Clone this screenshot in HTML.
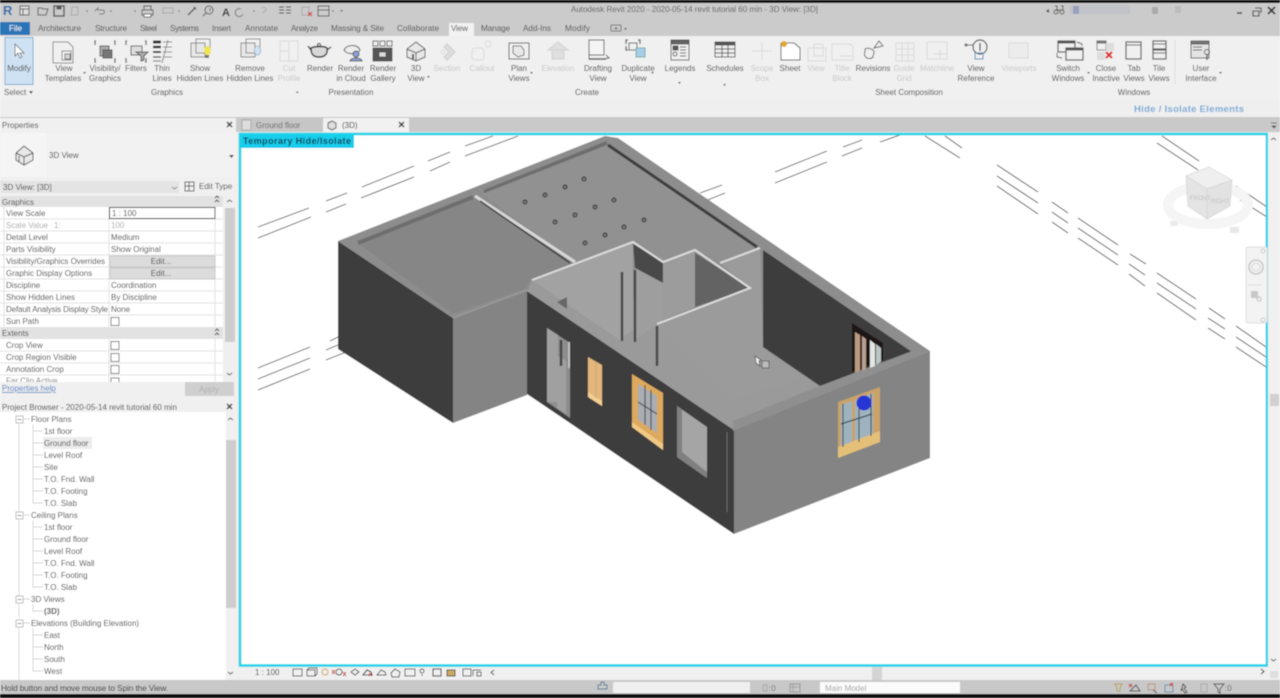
<!DOCTYPE html>
<html><head><meta charset="utf-8"><title>Autodesk Revit 2020</title>
<style>
html,body{margin:0;padding:0;background:#fff;width:1280px;height:698px;overflow:hidden}
svg{display:block;position:absolute;left:0;top:0}
text{font-family:"Liberation Sans",Arial,sans-serif;font-size:8px;fill:#3e3e3e}
.c{text-anchor:middle}
.l{fill:#c8c8c8}
.t{font-size:8.2px;fill:#4a4a4a}
.i{fill:none;stroke:#5a5a5a;stroke-width:1}
.g{stroke:#444;stroke-width:.9;fill:none}
.f{fill:none;stroke:#dadada;stroke-width:1}
.r{stroke:#d8d8d8;stroke-width:.7}
</style></head><body>
<svg width="1280" height="698" viewBox="0 0 1280 698" xmlns="http://www.w3.org/2000/svg">
<defs><filter id="b" x="-2%" y="-2%" width="104%" height="104%"><feGaussianBlur stdDeviation="0.45"/></filter></defs>
<g filter="url(#b)">
<!-- chrome backgrounds -->
<rect width="1280" height="698" fill="#f0f0f0"/>
<rect y="3" width="1280" height="33" fill="#cbcbcb"/>
<rect y="36" width="1280" height="62" fill="#f0f0f0"/>
<rect y="98" width="1280" height="19" fill="#efefef"/>
<rect y="117" width="1280" height="15" fill="#c9c9c9"/>
<rect y="0" width="1280" height="3" fill="#0a0a0a"/>
<!-- QAT -->
<text x="3" y="15" style="font-size:13px;font-weight:bold;fill:#2d6aa8">R</text>
<g class="i">
<rect x="20" y="6" width="9" height="9" fill="#ddd"/><path d="M20 9h9M23 9v6"/>
<path d="M38 8h4l1 1h5l-2 6h-8z"/>
<rect x="54" y="6" width="10" height="10" stroke-width="1.400"/><rect x="57" y="6" width="4" height="3" fill="#555"/>
<path d="M72 7h6v8h-7z" stroke="#aaa"/>
<path d="M95 11l3-3v2h5c2 0 2 4-1 4h-3" stroke="#777"/>
<path d="M119 13h9M123 9l3 3" stroke="#ccc"/>
<rect x="142" y="10" width="11" height="5"/><rect x="144" y="6" width="7" height="4"/><rect x="144" y="14" width="7" height="3" fill="#fff"/>
<rect x="163" y="8" width="10" height="5" stroke="#aaa"/>
<path d="M188 15l7-7M194 7l2 2" stroke-width="1.400"/>
<circle cx="209" cy="10" r="4"/><path d="M206 13l-3 3M210 8v3"/>
<path d="M241 9a4 4 0 1 0 2 5" stroke="#777"/><path d="M262 8c3-2 5 1 3 3l-2 2" stroke="#aaa"/>
<path d="M279 7h5M279 10h5M279 13h5M286 7h5M286 10h5M286 13h5" stroke="#333"/>
<rect x="302" y="7" width="7" height="8" stroke="#aaa"/>
<rect x="318" y="6" width="11" height="10"/><path d="M318 10h11"/>
</g>
<text x="222" y="16" style="font-size:11px;font-weight:bold;fill:#333">A</text>
<path d="M308 12l4 4M312 12l-4 4" stroke="#c33" stroke-width="1.200"/>
<g fill="#666"><circle cx="87" cy="11" r=".8"/><circle cx="111" cy="11" r=".8"/><circle cx="135" cy="11" r=".8"/><circle cx="179" cy="11" r=".8"/><circle cx="254" cy="11" r=".8"/><circle cx="333" cy="11" r=".8"/><path d="M340 10h3l-1.500 2z"/></g>
<text class="c" x="694.500" y="12" textLength="247" style="font-size:8px;fill:#5e5e5e">Autodesk Revit 2020 - 2020-05-14 revit tutorial 60 min - 3D View: [3D]</text>
<!-- window controls / search -->
<rect x="1070" y="5" width="60" height="9" fill="#b8bcc8" opacity=".5"/><rect x="1073" y="6" width="6" height="8" fill="#7f88b8" opacity=".6"/>
<rect x="1152" y="7" width="6" height="7" fill="#aaa"/><rect x="1175" y="6" width="6" height="7" fill="#bbb"/>
<path d="M1046 11l3-2v4z" fill="#444"/>
<g class="i" stroke-width="1.200"><circle cx="1056" cy="12" r="2"/><circle cx="1062" cy="12" r="2"/><path d="M1055 6h2v4M1061 6h2v4M1057 10h4"/></g>
<path d="M1237 13h5" stroke="#444" stroke-width="1.500"/>
<path d="M1253 11h6v5h-6zM1255 8h6v5" fill="none" stroke="#444" stroke-width="1.100"/>
<path d="M1268 7l7 7M1275 7l-7 7" stroke="#333" stroke-width="1.700"/>
<!-- tabs -->
<rect x="0" y="22" width="30" height="13" fill="#2b74b8"/>
<text class="c" x="15.500" y="31" style="fill:#f2f6fa;font-size:8px">File</text>
<rect x="449" y="23" width="25" height="13" fill="#f2f2f2"/>
<text class="t" x="38" y="31" textLength="43">Architecture</text>
<text class="t" x="95" y="31" textLength="32">Structure</text>
<text class="t" x="140" y="31" textLength="17">Steel</text>
<text class="t" x="170" y="31" textLength="29">Systems</text>
<text class="t" x="212" y="31" textLength="19">Insert</text>
<text class="t" x="245" y="31" textLength="33">Annotate</text>
<text class="t" x="291" y="31" textLength="27">Analyze</text>
<text class="t" x="331" y="31" textLength="53">Massing &amp; Site</text>
<text class="t" x="397" y="31" textLength="42">Collaborate</text>
<text class="t" x="451" y="31" textLength="17">View</text>
<text class="t" x="481" y="31" textLength="29">Manage</text>
<text class="t" x="523" y="31" textLength="28">Add-Ins</text>
<text class="t" x="565" y="31" textLength="25">Modify</text>
<rect x="611" y="25" width="10" height="6" rx="1" fill="none" stroke="#555" stroke-width=".8"/><path d="M614 29l2-2 2 2z" fill="#555"/><path d="M624 28h3l-1.500 2z" fill="#555"/>
<!-- Modify -->
<rect x="5" y="37.500" width="28" height="47" fill="#cfe2f3" stroke="#7faed3"/>
<path d="M15 44v12l3-3 2 5 2-1-2-4h4z" fill="#fff" stroke="#666" stroke-width=".8"/>
<text class="c" x="19" y="71">Modify</text>
<text x="4" y="95">Select</text><path d="M29 91h4l-2 3z" fill="#555"/>
<!-- ribbon icons -->
<g class="i">
<path d="M53 42h15l5 5v16H53z" stroke="#888"/><rect x="62" y="51" width="9" height="9" stroke="#888"/><rect x="65" y="54" width="5" height="5" fill="#d8d8d8" stroke="#777"/>
<path d="M96 41h-1v4M114 41h1v4M96 62h-1v-4M114 62h1v-4" stroke-width="1.200"/><rect x="100" y="46" width="9" height="10" fill="#aaa"/><rect x="103" y="50" width="9" height="8" fill="#777"/>
<path d="M127 41h-1v4M145 41h1v4M127 62h-1v-4M145 62h1v-4" stroke-width="1.200"/><rect x="131" y="46" width="11" height="9" fill="#ddd"/><path d="M136 52h12l-4 4v4l-3 1v-5z" fill="#aaa"/>
<path d="M153 42h8" stroke="#333" stroke-width="3"/><path d="M153 47h8" stroke="#333" stroke-width="2.400"/><path d="M153 52h8" stroke="#333" stroke-width="1.800"/><path d="M153 57h8" stroke="#333" stroke-width="1.200"/><path d="M153 61h8"/><path d="M163 42h9M163 47h9M163 52h9M163 57h9" stroke="#888"/><path d="M168 40l-6 23" stroke="#888"/>
<rect x="191" y="43" width="14" height="14" fill="#e8e8e8" stroke="#888"/><rect x="196" y="39" width="14" height="14" stroke="#888"/>
<rect x="241" y="43" width="14" height="14" fill="#e8e8e8" stroke="#888"/><rect x="246" y="39" width="14" height="14" stroke="#888"/>
<path d="M311 48c4-2 14-2 16 0 1 6-2 9-8 9-6 0-8-3-8-9z" fill="#d8d8d8" stroke="#333" stroke-width="1.400"/><path d="M327 50l4-3M311 50l-3-4" stroke="#333" stroke-width="1.400"/><circle cx="319" cy="45" r="1.500" stroke="#333"/>
<path d="M344 50c3-6 14-6 16 0-2 5-13 5-16 0z" fill="#eee"/><circle cx="356" cy="54" r="3" fill="#8ea0d8"/><path d="M350 61c1-4 11-4 12 0z" fill="#8ea0d8"/>
<rect x="373" y="41" width="5" height="5"/><rect x="380" y="41" width="5" height="5"/><rect x="387" y="41" width="5" height="5"/><rect x="373" y="48" width="19" height="13" fill="#555"/><rect x="379" y="52" width="7" height="5" fill="#ddd"/>
<path d="M407 49l9-7 9 7v8l-9 4-9-4z" fill="#e8e8e8"/><path d="M407 49l9 4 9-4M416 53v8"/><path d="M413 54v6" stroke-width="2"/>
<rect x="509" y="43" width="20" height="16"/><path d="M513 46h8l3 4v5l-6 2-5-4z" stroke="#777" fill="#e8e8e8"/>
<path d="M589 40h15v15h-15z" fill="#f4f4f4"/><path d="M589 55v4h17"/><path d="M604 59l5-1-3-3" /><path d="M589 59h17" stroke-width="1.600"/>
<path d="M628 40h-2v4M638 40h2v4M628 50h-2v-4" stroke-width="1.200"/><rect x="629" y="43" width="8" height="7"/><rect x="636" y="48" width="9" height="9" fill="#a8cdea" stroke="#7aa"/>
<rect x="671" y="40" width="18" height="20"/><rect x="672" y="41" width="16" height="3" fill="#666"/><rect x="673" y="46" width="5" height="4" fill="#555"/><circle cx="675" cy="54" r="2"/><path d="M680 47h6M680 50h6M680 53h6M680 56h6"/>
<rect x="715" y="42" width="20" height="15" fill="#eee"/><rect x="715" y="42" width="20" height="3" fill="#555"/><path d="M715 49h20M715 53h20M722 45v12M728 45v12"/>
<path d="M781 43h13l6 5v12h-19z" fill="#fff"/><circle cx="784" cy="44" r="3" fill="#e3a82a" stroke="none"/>
<path d="M865 49c3-2 6 0 8 1 3 3-1 5 0 7-3 3-7 1-8-1-2-2 1-4 0-7zM874 48l5-7 4 5z" stroke-width=".9"/>
<circle cx="980" cy="47" r="7" stroke-width="1.200"/><path d="M966 45h7"/><circle cx="966" cy="45" r="1"/>
<path d="M980 43v8" stroke="#333" stroke-width="1.200"/><rect x="975" y="53" width="8" height="6" stroke="#4a8ac0"/>
<rect x="1058" y="41" width="17" height="11" stroke-width="1.200"/><rect x="1058" y="41" width="17" height="2" fill="#555"/><rect x="1066" y="48" width="17" height="12" fill="#f0f0f0" stroke-width="1.200"/><rect x="1066" y="48" width="17" height="2" fill="#555"/><path d="M1077 42l5 2v2M1057 53v4l5 1"/>
<rect x="1097" y="41" width="9" height="9" stroke="#888"/><rect x="1097" y="41" width="9" height="2" fill="#888"/><rect x="1106" y="43" width="8" height="8" fill="#ddd" stroke="none"/><rect x="1097" y="52" width="8" height="8" fill="#ddd" stroke="none"/>
<rect x="1126" y="42" width="15" height="17" stroke-width="1.200"/><path d="M1126 45h15" />
<rect x="1153" y="41" width="13" height="8" stroke-width="1.200"/><rect x="1153" y="50" width="13" height="9" stroke-width="1.200"/><path d="M1153 44h13M1153 53h13"/>
<rect x="1191" y="41" width="18" height="17" fill="#e4e4e4"/><rect x="1191" y="41" width="18" height="3" fill="#777"/><path d="M1193 47h9M1193 50h9"/><circle cx="1207" cy="52" r="2.500"/><path d="M1207 54v6" stroke-width="1.400"/>
</g>
<path d="M1106 52l6 6M1112 52l-6 6" stroke="#d33" stroke-width="2.200"/>
<path d="M206 58c-3-4-2-8 1-9 4 0 5 5 2 9z" fill="#f3e64a" transform="translate(0,-3)"/><rect x="205" y="55" width="4" height="3" fill="#777"/>
<path d="M256 58c-3-4-2-8 1-9 4 0 5 5 2 9z" fill="#cfe0f4" stroke="#8aa" stroke-width=".6" transform="translate(0,-3)"/>
<!-- disabled icons -->
<g class="f">
<rect x="280" y="41" width="18" height="20"/><path d="M289 41v20M280 51h9"/>
<path d="M447 44l8 8-8 8-3-3 5-5-5-5z" fill="#ddd" stroke="#ccc"/><circle cx="443" cy="52" r="2"/>
<rect x="472" y="48" width="12" height="12" rx="3"/><circle cx="488" cy="44" r="3"/>
<path d="M548 50l10-8 10 8zM552 50h12v9h-12z" fill="#dfdfdf" stroke="#d0d0d0"/>
<path d="M752 51h20M762 42v18"/><rect x="814" y="44" width="9" height="12"/><rect x="808" y="48" width="18" height="13"/>
<path d="M832 44h18l3 3v13h-21z"/><path d="M840 56h12"/><path d="M896 43h18v18h-18zM902 43v18M908 43v18M896 49h18M896 55h18"/><rect x="927" y="42" width="20" height="17"/><path d="M934 54h12M940 50v8"/>
<rect x="1009" y="43" width="19" height="15" fill="#ececec"/>
</g>
<path d="M1175 40v44" stroke="#dcdcdc"/>
<!-- ribbon labels -->
<text class="c" x="64" y="71">View</text><text class="c" x="63" y="81">Templates</text>
<text class="c" x="105" y="71">Visibility/</text><text class="c" x="105" y="81">Graphics</text>
<text class="c" x="136" y="71">Filters</text>
<text class="c" x="162" y="71">Thin</text><text class="c" x="162" y="81">Lines</text>
<text class="c" x="200" y="71">Show</text><text class="c" x="200" y="81">Hidden Lines</text>
<text class="c" x="250" y="71">Remove</text><text class="c" x="250" y="81">Hidden Lines</text>
<text class="c l" x="289" y="71">Cut</text><text class="c l" x="289" y="81">Profile</text>
<text class="c" x="320" y="71">Render</text>
<text class="c" x="351" y="71">Render</text><text class="c" x="351" y="81">in Cloud</text>
<text class="c" x="383" y="71">Render</text><text class="c" x="383" y="81">Gallery</text>
<text class="c" x="416" y="71">3D</text><text class="c" x="416" y="81">View</text>
<text class="c l" x="447" y="71">Section</text><text class="c l" x="482" y="71">Callout</text>
<text class="c" x="519" y="71">Plan</text><text class="c" x="519" y="81">Views</text>
<text class="c l" x="558" y="71">Elevation</text>
<text class="c" x="598" y="71">Drafting</text><text class="c" x="598" y="81">View</text>
<text class="c" x="638" y="71">Duplicate</text><text class="c" x="638" y="81">View</text>
<text class="c" x="680" y="71">Legends</text>
<text class="c" x="725" y="71">Schedules</text>
<text class="c l" x="762" y="71">Scope</text><text class="c l" x="762" y="81">Box</text>
<text class="c" x="790" y="71">Sheet</text>
<text class="c l" x="816" y="71">View</text>
<text class="c l" x="842" y="71">Title</text><text class="c l" x="842" y="81">Block</text>
<text class="c" x="873" y="71">Revisions</text>
<text class="c l" x="904" y="71">Guide</text><text class="c l" x="904" y="81">Grid</text>
<text class="c l" x="937" y="71">Matchline</text>
<text class="c" x="976" y="71">View</text><text class="c" x="976" y="81">Reference</text>
<text class="c l" x="1019" y="71">Viewports</text>
<text class="c" x="1068" y="71">Switch</text><text class="c" x="1068" y="81">Windows</text>
<text class="c" x="1106" y="71">Close</text><text class="c" x="1106" y="81">Inactive</text>
<text class="c" x="1134" y="71">Tab</text><text class="c" x="1134" y="81">Views</text>
<text class="c" x="1159" y="71">Tile</text><text class="c" x="1159" y="81">Views</text>
<text class="c" x="1201" y="71">User</text><text class="c" x="1201" y="81">Interface</text>
<text class="c" x="167" y="95">Graphics</text>
<text class="c" x="351" y="95">Presentation</text>
<text class="c" x="587" y="95">Create</text>
<text class="c" x="909" y="95">Sheet Composition</text>
<text class="c" x="1134" y="95">Windows</text>
<g fill="#555"><path d="M83 72h3l-1.500 2zM530 72h3l-1.500 2zM427 76h3l-1.500 2zM651 72h3l-1.500 2zM1087 72h3l-1.500 2zM1219 72h3l-1.500 2zM678 82h3l-1.500 2zM723 84h3l-1.500 2z"/></g>
<path d="M297 91l2 2-3 0z" fill="#666"/>
<text x="1134" y="112" textLength="110" style="font-size:9.500px;font-weight:bold;fill:#73a9d8">Hide / Isolate Elements</text>
<!-- view tabs -->
<rect x="240" y="118" width="83" height="14" fill="#c6c6c6"/>
<rect x="323" y="118" width="86" height="14" fill="#f1f1f1"/>
<rect x="242" y="120" width="9" height="10" fill="#ddd" stroke="#aaa"/>
<text x="256" y="128" style="fill:#666">Ground floor</text>
<path d="M328 123l4-2 4 2v5l-4 2-4-2z" fill="#ddd" stroke="#555"/>
<text x="342" y="128" style="fill:#333">(3D)</text>
<path d="M399 122l5 5M404 122l-5 5" stroke="#333" stroke-width="1.400"/>
<path d="M1271 123h6M1272 126h4l-2 2z" fill="#555" stroke="#555" stroke-width=".7"/>

<!-- LEFT: Properties -->
<rect x="0" y="118" width="236" height="562" fill="#f0f0f0"/>
<text x="2" y="128">Properties</text>
<path d="M227 122l5 5M232 122l-5 5" stroke="#333" stroke-width="1.400"/>
<rect x="1" y="133" width="46" height="44" fill="#f5f5f5"/>
<rect x="47" y="133" width="189" height="44" fill="#f2f2f2"/>
<path d="M16 153l8-7 9 7v7l-9 5-8-5z" fill="#e8e8e8" stroke="#555"/><path d="M16 153l8 4 9-4M24 157v8M19 156v6" fill="none" stroke="#555"/>
<text x="49" y="158">3D View</text>
<path d="M229 155h5l-2.500 3z" fill="#444"/>
<rect x="0" y="181" width="179" height="12" fill="#e4e4e4"/>
<text x="3" y="190">3D View: [3D]</text>
<path d="M172 187l2.500 2 2.500-2" stroke="#888" fill="none"/>
<g class="i"><rect x="185" y="182" width="9" height="9"/><path d="M185 186h9M189 182v9"/></g>
<text x="199" y="189">Edit Type</text>
<!-- property table -->
<rect x="0" y="196" width="223" height="11" fill="#e2e2e2"/>
<text x="2" y="205">Graphics</text>
<rect x="0" y="207" width="223" height="120" fill="#fff"/>
<rect x="0" y="327" width="223" height="12" fill="#e2e2e2"/>
<rect x="0" y="339" width="223" height="44" fill="#fff"/>
<text x="2" y="336">Extents</text>
<g class="r">
<path d="M0 219h223M0 231h223M0 243h223M0 255h223M0 267h223M0 279h223M0 291h223M0 303h223M0 315h223M0 351h223M0 363h223M0 375h223M109 207v120M109 339v44M215 207v120M215 339v44M4 207v120"/>
</g>
<rect x="109.500" y="207.500" width="105.500" height="11" fill="#fff" stroke="#333"/>
<text x="112" y="216">1 : 100</text>
<rect x="110" y="256" width="105" height="11" fill="#dcdcdc" stroke="#bbb" stroke-width=".7"/>
<rect x="110" y="268" width="105" height="11" fill="#dcdcdc" stroke="#bbb" stroke-width=".7"/>
<text x="6" y="216">View Scale</text>
<text x="6" y="228" style="fill:#aaa">Scale Value</text><text x="54" y="228" style="fill:#aaa">1:</text><text x="111" y="228" style="fill:#aaa">100</text>
<text x="6" y="240">Detail Level</text><text x="111" y="240">Medium</text>
<text x="6" y="252">Parts Visibility</text><text x="111" y="252">Show Original</text>
<text x="6" y="264" textLength="99">Visibility/Graphics Overrides</text><text class="c" x="161" y="264">Edit...</text>
<text x="6" y="276">Graphic Display Options</text><text class="c" x="161" y="276">Edit...</text>
<text x="6" y="288">Discipline</text><text x="111" y="288">Coordination</text>
<text x="6" y="300">Show Hidden Lines</text><text x="111" y="300">By Discipline</text>
<text x="6" y="312" textLength="102">Default Analysis Display Style</text><text x="111" y="312">None</text>
<text x="6" y="324">Sun Path</text>
<text x="6" y="348">Crop View</text>
<text x="6" y="360">Crop Region Visible</text>
<text x="6" y="372">Annotation Crop</text>
<rect x="111" y="317.500" width="8" height="8" fill="#fff" stroke="#777"/>
<rect x="111" y="341.500" width="8" height="8" fill="#fff" stroke="#777"/>
<rect x="111" y="353.500" width="8" height="8" fill="#fff" stroke="#777"/>
<rect x="111" y="365.500" width="8" height="8" fill="#fff" stroke="#777"/>
<rect x="111" y="378" width="8" height="5" fill="#fff" stroke="#777"/>
<text x="6" y="383.500" style="fill:#777">Far Clip Active</text>
<rect x="0" y="382" width="236" height="16" fill="#f0f0f0"/>
<path d="M215 198l2 -2 2 2M215 202l2-2 2 2M215 331l2-2 2 2M215 335l2-2 2 2" stroke="#444" fill="none"/>
<rect x="225" y="196" width="10" height="187" fill="#efefef"/>
<rect x="225" y="208" width="10" height="134" fill="#cdcdcd"/>
<path d="M227 202l2.500-2 2.500 2M227 373l2.500 2 2.500-2" stroke="#555" fill="none"/>
<text x="2" y="391" style="fill:#3f7cc0;text-decoration:underline">Properties help</text>
<rect x="185" y="382" width="49" height="14" fill="#cfcfcf"/>
<text class="c" x="209" y="392" style="fill:#b0b0b0">Apply</text>
<!-- Project Browser -->
<rect x="0" y="400" width="236" height="12" fill="#f0f0f0"/>
<text x="2" y="410" textLength="175">Project Browser - 2020-05-14 revit tutorial 60 min</text>
<path d="M227 404l5 5M232 404l-5 5" stroke="#333" stroke-width="1.400"/>
<rect x="0" y="412" width="226" height="268" fill="#fff"/>
<rect x="43" y="437" width="49" height="12" fill="#ececec"/>
<g stroke="#d4d4d4" stroke-width=".9" fill="none">
<path d="M19 424v90M19 520v78M19 604v14M19 628v52M33 424v80M33 431h10M33 443h10M33 455h10M33 467h10M33 479h10M33 491h10M33 503h10M33 520v68M33 527h10M33 539h10M33 551h10M33 563h10M33 575h10M33 587h10M33 604v8M33 611h10M33 628v44M33 635h10M33 647h10M33 659h10M33 671h10M23 419h7M23 515h7M23 599h7M23 623h7"/>
</g>
<g fill="#fff" stroke="#aaa" stroke-width=".8"><rect x="16" y="416" width="7" height="7"/><rect x="16" y="512" width="7" height="7"/><rect x="16" y="596" width="7" height="7"/><rect x="16" y="620" width="7" height="7"/></g>
<path d="M17.500 419.500h4M17.500 515.500h4M17.500 599.500h4M17.500 623.500h4" stroke="#666" stroke-width=".8"/>
<text x="31" y="422">Floor Plans</text>
<text x="44" y="434">1st floor</text>
<text x="44" y="446">Ground floor</text>
<text x="44" y="458">Level Roof</text>
<text x="44" y="470">Site</text>
<text x="44" y="482">T.O. Fnd. Wall</text>
<text x="44" y="494">T.O. Footing</text>
<text x="44" y="506">T.O. Slab</text>
<text x="31" y="518">Ceiling Plans</text>
<text x="44" y="530">1st floor</text>
<text x="44" y="542">Ground floor</text>
<text x="44" y="554">Level Roof</text>
<text x="44" y="566">T.O. Fnd. Wall</text>
<text x="44" y="578">T.O. Footing</text>
<text x="44" y="590">T.O. Slab</text>
<text x="31" y="602">3D Views</text>
<text x="44" y="614" style="font-weight:bold">(3D)</text>
<text x="31" y="626">Elevations (Building Elevation)</text>
<text x="44" y="638">East</text>
<text x="44" y="650">North</text>
<text x="44" y="662">South</text>
<text x="44" y="674">West</text>
<rect x="226" y="412" width="10" height="268" fill="#f0f0f0"/>
<rect x="226" y="440" width="10" height="168" fill="#cdcdcd"/>
<path d="M228 420l2.500-2 2.500 2M228 672l2.500 2 2.500-2" stroke="#555" fill="none"/>

<!-- VIEWPORT -->
<rect x="240" y="134" width="1028" height="532" fill="#fff"/>
<g stroke="#3a3a3a" stroke-width=".9" fill="none">
<path d="M258 227L309 208M258 238L311 217M326 201L347 193M326 212L346 204M362 187L414 166M361 198L414 177M428 161L450 152M430 171L450 162M465 146L493 136M465 156L518 136"/>
<path d="M700 193L722 185M700 203L725 193M775 172L827 151M775 183L827 162M842 156L862 148M843 147L862 140M880 142L900 135"/>
<path d="M258 368L310 347M258 379L310 358M258 390L310 369M326 350L338 345M326 360L346 352M330 341L338 337"/>
<path d="M925 136L960 158M945 136L962 148M997 165L1038 192M997 176L1038 203M997 186L1038 214M1052 202L1068 213M1052 212L1068 223M1052 222L1068 233M1078 218L1118 245M1078 228L1118 255M1078 238L1118 265"/>
<path d="M1162 136L1199 161M1157 143L1198 170M1208 167L1223 177M1236 186L1267 207M1240 200L1267 217M1130 254L1146 264M1129 264L1145 275M1129 274L1145 286M1157 273L1196 299M1157 283L1196 309M1157 293L1196 320M1209 308L1225 319M1208 318L1225 329M1208 328L1225 339M1236 326L1266 347M1236 337L1266 357M1236 347L1266 367"/>
</g>
<!-- Building -->
<polygon points="338,241 453,318 453,423 338,349" fill="#3e3e3e"/>
<polygon points="453,318 527,290 527,395 453,423" fill="#848484"/>
<polygon points="527,291 734,430 734,534 527,394" fill="#3d3d3d"/>
<polygon points="734,430 930,351 930,458 734,534" fill="#848484"/>
<polygon points="338,241 605,136 618,138 930,351 734,430 527,290 453,318" fill="#8d8d8d"/>
<polygon points="358,243 475,198 575,262 530,280 527,288 453,314" fill="#868686"/>
<path d="M358,243 L473,197" stroke="#6e6e6e" stroke-width="4"/>
<path d="M484,192 L607,143" stroke="#6e6e6e" stroke-width="4"/>
<path d="M453,318 L527,290" stroke="#9a9a9a" stroke-width="1.500"/>
<polygon points="482,194 607,145 760,248 720,263 695,250 663,262 633,242 575,262" fill="#919191"/>
<path d="M608,145 L757,247" stroke="#3c3c3c" stroke-width="3"/>
<path d="M475,196 L575,262" stroke="#d8d8d8" stroke-width="3"/>
<path d="M480,201 L570,263" stroke="#3c3c3c" stroke-width="1.500"/>
<g fill="#777" stroke="#2a2a2a" stroke-width=".9">
<circle cx="525" cy="202" r="2"/><circle cx="545" cy="195" r="2"/><circle cx="565" cy="187" r="2"/><circle cx="584" cy="179" r="2"/><circle cx="555" cy="222" r="2"/><circle cx="575" cy="215" r="2"/><circle cx="595" cy="207" r="2"/><circle cx="614" cy="200" r="2"/><circle cx="585" cy="243" r="2"/><circle cx="605" cy="235" r="2"/><circle cx="624" cy="227" r="2"/><circle cx="644" cy="220" r="2"/>
</g>
<polygon points="527,291 532,280 633,243 633,300 657,325 750,288 720,263 760,248 763,347 820,386 912,352 734,430" fill="#9a9a9a"/>
<polygon points="532,280 633,243 633,330 620,340 590,320" fill="#a2a2a2"/>
<polygon points="633,244 663,262 663,283 635,268" fill="#4a4a4a"/>
<polygon points="635,268 663,283 663,320 635,340" fill="#9e9e9e"/>
<polygon points="663,262 695,251 695,307 663,320" fill="#9c9c9c"/>
<polygon points="695,253 750,288 695,307" fill="#646464"/>
<polygon points="657,325 750,288 720,263 760,248 763,347 800,380 730,400" fill="#9b9b9b"/>
<polygon points="763,250 912,352 820,386 763,347" fill="#3c3c3c"/>
<path d="M622,272V341M635,270V342" stroke="#444" stroke-width="2.400"/><path d="M657,326V366" stroke="#444" stroke-width="2.400"/>
<polygon points="557,302 567,297 567,309" fill="#666"/>
<path d="M532,280 L633,242 L663,262 L695,250 L750,288 L657,324" fill="none" stroke="#dcdcdc" stroke-width="2"/>
<path d="M720,263 L760,248" stroke="#dcdcdc" stroke-width="2"/>
<polygon points="733,431 930,351 912,351 820,386 733,421" fill="#8f8f8f"/>
<!-- door left wall -->
<polygon points="547,328 570,343 570,418 547,402" fill="#8d8d8d"/>
<polygon points="547,328 558,335 558,356 566,361 566,414 557,408 557,402 547,402" fill="#a0a0a0"/>
<path d="M561,340V366" stroke="#444" stroke-width="2.500"/><path d="M569,342V368" stroke="#ccc" stroke-width="1.500"/>
<!-- window 1 -->
<polygon points="588,357 602,365 602,406 588,397" fill="#e3b67d"/><polygon points="588,392 602,401 602,406 588,397" fill="#f2cf93"/><path d="M596,362V398" stroke="#bb9a70" stroke-width=".6"/>
<!-- window 2 -->
<polygon points="632,374 663,393 663,450 632,427" fill="#dda95f"/>
<polygon points="638,384 657,396 657,433 638,420" fill="#a9adb4"/>
<path d="M645,385V425M651,390V430M638,402L657,414" stroke="#222" stroke-width=".9"/>
<polygon points="632,422 663,444 663,450 632,427" fill="#f0c985"/>
<!-- opening -->
<polygon points="677,406 707,427 707,478 677,457" fill="#a5a5a5"/>
<polygon points="677,406 682,410 682,452 707,472 707,478 677,457" fill="#808080"/>
<path d="M727,432V512" stroke="#6a6a6a" stroke-width="1"/>
<!-- back wall window -->
<polygon points="852,323 883,343 883,360 852,372" fill="#1f1712"/>
<polygon points="855,332 860,335 860,371 855,373" fill="#b89a80"/>
<polygon points="862,336 866,339 866,369 862,371" fill="#b8a090"/>
<polygon points="870,340 875,344 875,366 870,368" fill="#e2e6e4"/>
<polygon points="876,344 881,348 881,362 876,365" fill="#b9c6c2"/>
<!-- front window -->
<polygon points="838,402 880,387 880,442 838,458" fill="#c9a368"/>
<polygon points="841,405 852,401 852,444 841,448" fill="#9fb3bf"/><polygon points="855,400 873,393 873,437 855,443" fill="#9fb3bf"/>
<polygon points="838,447 880,431 880,442 838,458" fill="#e3bf78"/>
<path d="M843,404V447M859,398V442M871,394V436M841,424L872,414" stroke="#1f2a3a" stroke-width="1"/>
<circle cx="864" cy="403" r="7.500" fill="#2636d4"/>
<!-- cursor -->
<g stroke="#555" stroke-width=".8"><path d="M755 356l6 4-2 1 1 5-4-3z" fill="#eee"/><rect x="762" y="361" width="7" height="7" fill="#bbb"/></g>
<!-- temp hide label & cyan border -->
<rect x="240" y="134" width="114" height="14" fill="#17cdec"/>
<text x="243" y="144" textLength="108" style="font-size:9px;font-weight:bold;fill:#15384a">Temporary Hide/Isolate</text>
<rect x="240" y="134" width="1027" height="531.500" fill="none" stroke="#1cd2e8" stroke-width="2.600"/>
<!-- view cube -->
<ellipse cx="1208" cy="205" rx="40" ry="19" fill="none" stroke="#f5f5f5" stroke-width="10"/>
<g stroke="#d4d4d4" stroke-width=".7"><polygon points="1186,176 1209,167 1232,180 1207,189" fill="#efefef"/><polygon points="1186,176 1207,189 1207,219 1188,206" fill="#e4e4e4"/><polygon points="1207,189 1232,180 1230,206 1207,219" fill="#e2e2e2"/></g>
<text x="1190" y="200" style="font-size:6px;fill:#c0c0c0">FRONT</text><text x="1211" y="203" style="font-size:6px;fill:#c0c0c0">RIGHT</text>
<rect x="1170" y="221" width="8" height="5" fill="#ececec"/><rect x="1230" y="227" width="9" height="6" fill="#e8e8e8"/>
<!-- nav bar -->
<rect x="1246" y="247" width="21" height="76" rx="2" fill="#f3f3f3" stroke="#dedede"/>
<circle cx="1256" cy="267" r="7" fill="none" stroke="#c8c8c8" stroke-width="1.500"/><circle cx="1256" cy="267" r="4" fill="none" stroke="#d8d8d8"/>
<rect x="1251" y="291" width="7" height="7" fill="#c8c8c8"/><circle cx="1259" cy="299" r="2" fill="none" stroke="#bbb"/>
<path d="M1248 285h14" stroke="#ddd"/><circle cx="1263" cy="251" r="2" fill="none" stroke="#ccc"/><circle cx="1263" cy="320" r="2" fill="none" stroke="#ccc"/>
<!-- right scrollbar -->
<rect x="1268" y="132" width="12" height="548" fill="#f0f0f0"/>
<path d="M1271 140l2.500-2 2.500 2" stroke="#555" fill="none"/>
<rect x="1270" y="394" width="9" height="12" fill="#d0d0d0"/>
<path d="M1271 659l2.500 2 2.500-2" stroke="#555" fill="none"/>
<!-- bottom view toolbar -->
<rect x="240" y="667" width="1040" height="13" fill="#f0f0f0"/>
<text x="255" y="675">1 : 100</text>
<g class="g">
<rect x="293" y="669" width="9" height="7"/><rect x="307" y="670" width="8" height="6"/><path d="M307 670l2-2h8v6l-2 2"/>
<circle cx="325" cy="672" r="3" stroke="#caa040"/><circle cx="339" cy="672" r="3"/>
<path d="M351 672l4-3 4 3-4 3z"/><path d="M363 675l4-5 4 2 1 3z" stroke-width="1.100"/><path d="M377 675l4-5 4 2 1 3z"/><path d="M391 673l4-4 5 3-1 5h-7z"/>
<rect x="405" y="669" width="10" height="7"/><circle cx="422" cy="671" r="2"/><path d="M422 674v2"/><rect x="433" y="669" width="8" height="7" stroke-width="1.100"/><rect x="447" y="670" width="8" height="6" fill="#caa860"/><rect x="463" y="669" width="8" height="7"/><path d="M473 670h8M473 670v6"/><rect x="477" y="672" width="4" height="4"/>
<path d="M494 670l-3 2.500 3 2.500" stroke-width="1"/>
</g>
<path d="M332 670l3 4M335 670l-3 4M343 672l3 4M346 672l-3 4M369 673l3 3M372 673l-3 3" stroke="#c33" stroke-width="1"/>
<rect x="872" y="667" width="10" height="13" fill="#d4d4d4"/>
<path d="M1261 669l3 2.500-3 2.500" stroke="#333" fill="none"/>
<rect x="1270" y="671" width="8" height="7" fill="#dedede"/>
<!-- status bar -->
<rect x="0" y="680" width="1280" height="14" fill="#c8c8c8"/>
<rect x="0" y="694" width="1280" height="4" fill="#0b0b0b"/>
<text x="1" y="691" textLength="167" style="font-size:8.200px;fill:#2c2c2c">Hold button and move mouse to Spin the View.</text>
<g class="g"><path d="M598 689v-4h3v-3h3v3h3v4h-9z" stroke="#4a7a9a"/></g>
<rect x="613" y="682" width="137" height="11" fill="#efefef"/>
<text x="769" y="691" style="fill:#777">:0</text><path d="M763 685h4v6h-4z" fill="none" stroke="#aaa"/>
<rect x="790" y="684" width="10" height="8" fill="none" stroke="#999"/><path d="M790 687h10M793 684v8" stroke="#999" stroke-width=".7"/>
<rect x="820" y="682" width="140" height="11" fill="#fbfbfb"/>
<text x="825" y="691" style="fill:#a0a0a0">Main Model</text>
<g class="g">
<path d="M1115 684h7l-2 4v3h-3v-3z" stroke="#b5a040"/><path d="M1130 691h10l-4-6z"/><rect x="1148" y="684" width="7" height="6" stroke="#c09070"/><path d="M1153 690l4 3"/><rect x="1165" y="685" width="8" height="7" stroke="#5a8ab0"/><path d="M1183 684l3 3-2 1 3 4-2 1-3-4-1 2z"/><rect x="1201" y="684" width="6" height="8" stroke="#aaa"/><path d="M1214 684h10l-4 5v4l-2-1v-3z"/>
</g>
<path d="M1129 684l3 3M1132 684l-3 3M1170 683l3 3M1173 683l-3 3" stroke="#c33" stroke-width="1"/>
<text x="1225" y="691" style="fill:#666">:0</text>
</g>
</svg>
</body></html>
